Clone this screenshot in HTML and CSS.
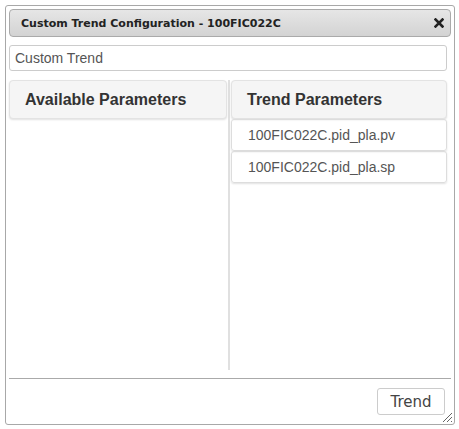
FILE: index.html
```html
<!DOCTYPE html>
<html>
<head>
<meta charset="utf-8">
<link rel="stylesheet" href="styles.css">
</head>
<body>
<div class="dialog">
  <div class="titlebar">
    <span class="title">Custom Trend Configuration - 100FIC022C</span>
    <svg class="close" width="10" height="10" viewBox="0 0 10 10"><path d="M1.5 1.5 L8.5 8.5 M8.5 1.5 L1.5 8.5" stroke="#222" stroke-width="2.6" stroke-linecap="square"/></svg>
  </div>
  <div class="body">
    <input class="name" type="text" value="Custom Trend">
    <div class="panels">
      <div class="col left">
        <div class="head">Available Parameters</div>
      </div>
      <div class="col right">
        <div class="head">Trend Parameters</div>
        <div class="item">100FIC022C.pid_pla.pv</div>
        <div class="item">100FIC022C.pid_pla.sp</div>
      </div>
    </div>
  </div>
  <div class="footer">
    <button class="btn">Trend</button>
  </div>
  <svg class="grip" width="12" height="12" viewBox="0 0 12 12"><path d="M11 2 L2 11 M11 6 L6 11 M11 10 L10 11" stroke="#666" stroke-width="1"/></svg>
</div>
</body>
</html>
```
FILE: styles.css
```css
html, body { margin: 0; padding: 0; background: #fff; }
.dialog {
  position: relative;
  margin: 5px;
  width: 450px;
  height: 420px;
  box-sizing: border-box;
  border: 1px solid #a8a8a8;
  border-radius: 3px;
  padding: 3px;
  display: flex;
  flex-direction: column;
}
.titlebar {
  height: 28px;
  box-sizing: border-box;
  border: 1px solid #aaa;
  border-radius: 4px;
  background: linear-gradient(#e6e6e6, #d3d3d3);
  display: flex;
  align-items: center;
  justify-content: space-between;
  padding: 0 6px 0 11px;
  font: bold 11px "DejaVu Sans", Verdana, sans-serif;
  color: #222;
}
.close { display: block; }
.body {
  padding: 8px 4px 0 0;
  flex: 1;
  display: flex;
  flex-direction: column;
}
.name {
  height: 26px;
  box-sizing: border-box;
  width: 100%;
  margin: 0;
  border: 1px solid #ccc;
  border-radius: 3px;
  padding: 0 5px;
  font: 14px "Liberation Sans", Arial, sans-serif;
  color: #555;
  outline: none;
}
.panels {
  margin-top: 9px;
  height: 290px;
  display: flex;
}
.col { display: flex; flex-direction: column; }
.left {
  width: 221px;
  box-sizing: border-box;
  border-right: 2px solid #e0e0e0;
  padding-right: 1px;
}
.right { flex: 1; margin-left: 1px; }
.head {
  height: 39px;
  box-sizing: border-box;
  border: 1px solid #e3e3e3;
  border-radius: 4px;
  background: #f5f5f5;
  box-shadow: 0 1px 2px rgba(0,0,0,0.12);
  display: flex;
  align-items: center;
  padding-left: 15px;
  font: bold 16px "Liberation Sans", Arial, sans-serif;
  color: #333;
}
.item {
  height: 32px;
  box-sizing: border-box;
  border: 1px solid #ddd;
  border-radius: 3px;
  box-shadow: 0 1px 2px rgba(0,0,0,0.12);
  display: flex;
  align-items: center;
  padding-left: 16px;
  font: 14px "Liberation Sans", Arial, sans-serif;
  color: #555;
}
.footer {
  margin-top: 8px;
  border-top: 1px solid #aaa;
  padding: 9px 6px 6px 0;
  display: flex;
  justify-content: flex-end;
}
.btn {
  height: 27px;
  width: 68px;
  box-sizing: border-box;
  border: 1px solid #ccc;
  border-radius: 3px;
  background: #fff;
  font: 15px "DejaVu Sans", Verdana, sans-serif;
  color: #444;
  padding: 0;
}
.grip { position: absolute; right: 1px; bottom: 1px; }
```
